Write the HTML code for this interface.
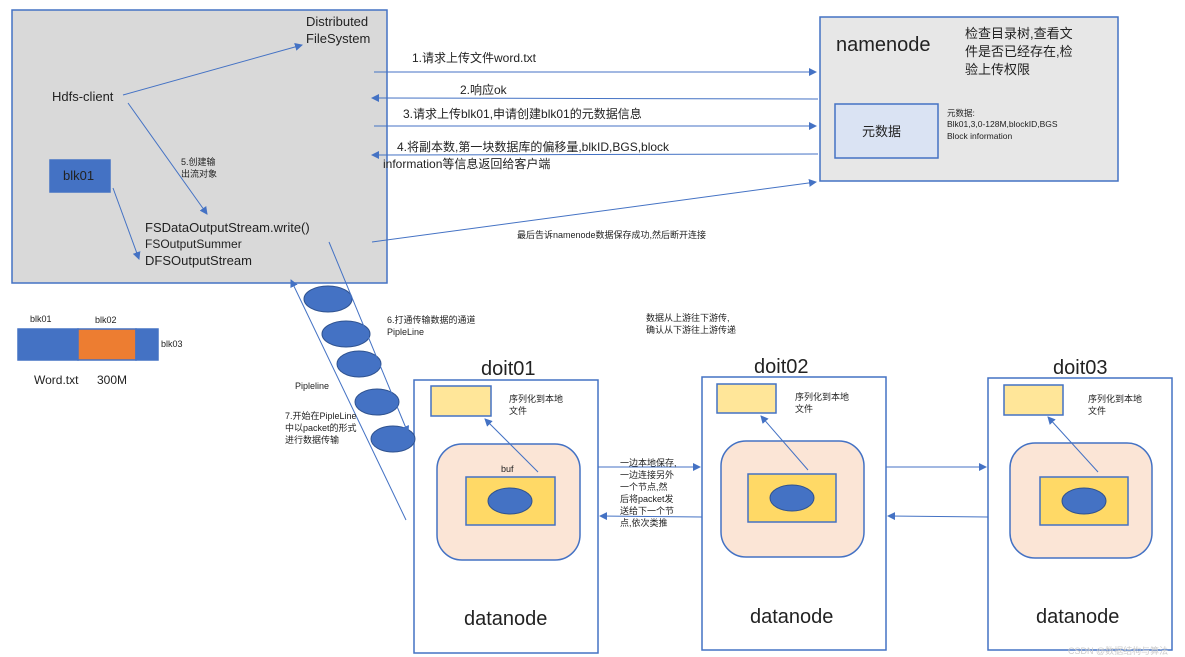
<!DOCTYPE html>
<html><head><meta charset="utf-8"><style>
body{margin:0;background:#fff;width:1185px;height:657px;overflow:hidden}
svg{display:block}
text{font-family:"Liberation Sans","Noto Sans CJK SC",sans-serif;fill:#222}
</style></head><body>
<svg width="1185" height="657" viewBox="0 0 1185 657">
<defs><marker id="a" markerWidth="8" markerHeight="8" refX="7" refY="4" orient="auto" markerUnits="userSpaceOnUse"><path d="M0,0 L8,4 L0,8z" fill="#4472c4"/></marker></defs>
<g stroke="#4472c4" stroke-width="1.5">
<rect x="12" y="10" width="375" height="273" fill="#d9d9d9"/>
<rect x="820" y="17" width="298" height="164" fill="#e7e7e7"/>
<rect x="835" y="104" width="103" height="54" fill="#dae3f3"/>
<rect x="50" y="160" width="60" height="32" fill="#4472c4"/>
<rect x="18" y="329" width="60" height="31" fill="#4472c4"/>
<rect x="78" y="329" width="58" height="31" fill="#ed7d31"/>
<rect x="136" y="329" width="22" height="31" fill="#4472c4"/>
<rect x="414" y="380" width="184" height="273" fill="#fff"/>
<rect x="702" y="377" width="184" height="273" fill="#fff"/>
<rect x="988" y="378" width="184" height="272" fill="#fff"/>
<rect x="431" y="386" width="60" height="30" fill="#ffe699"/>
<rect x="717" y="384" width="59" height="29" fill="#ffe699"/>
<rect x="1004" y="385" width="59" height="30" fill="#ffe699"/>
<rect x="437" y="444" width="143" height="116" rx="25" fill="#fbe5d6"/>
<rect x="721" y="441" width="143" height="116" rx="25" fill="#fbe5d6"/>
<rect x="1010" y="443" width="142" height="115" rx="25" fill="#fbe5d6"/>
<rect x="466" y="477" width="89" height="48" fill="#ffd966"/>
<rect x="748" y="474" width="88" height="48" fill="#ffd966"/>
<rect x="1040" y="477" width="88" height="48" fill="#ffd966"/>
</g>
<g fill="#4472c4" stroke="#2f528f" stroke-width="1">
<ellipse cx="510" cy="501" rx="22" ry="13"/>
<ellipse cx="792" cy="498" rx="22" ry="13"/>
<ellipse cx="1084" cy="501" rx="22" ry="13"/>
<ellipse cx="328" cy="299" rx="24" ry="13"/>
<ellipse cx="346" cy="334" rx="24" ry="13"/>
<ellipse cx="359" cy="364" rx="22" ry="13"/>
<ellipse cx="377" cy="402" rx="22" ry="13"/>
<ellipse cx="393" cy="439" rx="22" ry="13"/>
</g>
<g stroke="#4472c4" stroke-width="1" fill="none" marker-end="url(#a)">
<line x1="123" y1="95" x2="302" y2="45"/>
<line x1="128" y1="103" x2="207" y2="214"/>
<line x1="113" y1="188" x2="139" y2="259"/>
<line x1="374" y1="72" x2="816" y2="72"/>
<line x1="818" y1="99" x2="372" y2="98"/>
<line x1="374" y1="126" x2="816" y2="126"/>
<line x1="818" y1="154" x2="372" y2="155"/>
<line x1="372" y1="242" x2="816" y2="182"/>
<line x1="406" y1="520" x2="291" y2="280"/>
<line x1="329" y1="242" x2="408" y2="433"/>
<line x1="538" y1="472" x2="485" y2="419"/>
<line x1="808" y1="470" x2="761" y2="416"/>
<line x1="1098" y1="472" x2="1048" y2="417"/>
<line x1="598" y1="467" x2="700" y2="467"/>
<line x1="702" y1="517" x2="600" y2="516"/>
<line x1="886" y1="467" x2="986" y2="467"/>
<line x1="988" y1="517" x2="888" y2="516"/>
</g>
<text x="306" y="26" font-size="13">Distributed</text>
<text x="306" y="43" font-size="13">FileSystem</text>
<text x="52" y="101" font-size="13">Hdfs-client</text>
<text x="63" y="180" font-size="13">blk01</text>
<text x="181" y="165" font-size="9">5.创建输</text>
<text x="181" y="177" font-size="9">出流对象</text>
<text x="145" y="232" font-size="13">FSDataOutputStream.write()</text>
<text x="145" y="248" font-size="12">FSOutputSummer</text>
<text x="145" y="265" font-size="13">DFSOutputStream</text>
<text x="412" y="62" font-size="12">1.请求上传文件word.txt</text>
<text x="460" y="94" font-size="12">2.响应ok</text>
<text x="403" y="118" font-size="12">3.请求上传blk01,申请创建blk01的元数据信息</text>
<text x="397" y="151" font-size="12">4.将副本数,第一块数据库的偏移量,blkID,BGS,block</text>
<text x="383" y="168" font-size="12">information等信息返回给客户端</text>
<text x="517" y="238" font-size="9">最后告诉namenode数据保存成功,然后断开连接</text>
<text x="836" y="51" font-size="20">namenode</text>
<text x="965" y="38" font-size="13">检查目录树,查看文</text>
<text x="965" y="56" font-size="13">件是否已经存在,检</text>
<text x="965" y="74" font-size="13">验上传权限</text>
<text x="862" y="136" font-size="13">元数据</text>
<text x="947" y="116" font-size="8.5">元数据:</text>
<text x="947" y="127" font-size="8.5">Blk01,3,0-128M,blockID,BGS</text>
<text x="947" y="139" font-size="8.5">Block information</text>
<text x="30" y="322" font-size="9">blk01</text>
<text x="95" y="323" font-size="9">blk02</text>
<text x="161" y="347" font-size="9">blk03</text>
<text x="34" y="384" font-size="12">Word.txt</text>
<text x="97" y="384" font-size="12">300M</text>
<text x="387" y="323" font-size="9">6.打通传输数据的通道</text>
<text x="387" y="335" font-size="9">PipleLine</text>
<text x="295" y="389" font-size="9">Pipleline</text>
<text x="285" y="419" font-size="9">7.开始在PipleLine</text>
<text x="285" y="431" font-size="9">中以packet的形式</text>
<text x="285" y="443" font-size="9">进行数据传输</text>
<text x="646" y="321" font-size="9">数据从上游往下游传,</text>
<text x="646" y="333" font-size="9">确认从下游往上游传递</text>
<text x="481" y="375" font-size="20">doit01</text>
<text x="754" y="373" font-size="20">doit02</text>
<text x="1053" y="374" font-size="20">doit03</text>
<text x="509" y="402" font-size="9">序列化到本地</text>
<text x="509" y="414" font-size="9">文件</text>
<text x="795" y="400" font-size="9">序列化到本地</text>
<text x="795" y="412" font-size="9">文件</text>
<text x="1088" y="402" font-size="9">序列化到本地</text>
<text x="1088" y="414" font-size="9">文件</text>
<text x="501" y="472" font-size="9">buf</text>
<text x="620" y="466" font-size="9">一边本地保存,</text>
<text x="620" y="478" font-size="9">一边连接另外</text>
<text x="620" y="490" font-size="9">一个节点,然</text>
<text x="620" y="502" font-size="9">后将packet发</text>
<text x="620" y="514" font-size="9">送给下一个节</text>
<text x="620" y="526" font-size="9">点,依次类推</text>
<text x="464" y="625" font-size="20">datanode</text>
<text x="750" y="623" font-size="20">datanode</text>
<text x="1036" y="623" font-size="20">datanode</text>
<text x="1068" y="654" font-size="9" style="fill:#ccc">CSDN @数据结构与算法</text>
</svg>
</body></html>
